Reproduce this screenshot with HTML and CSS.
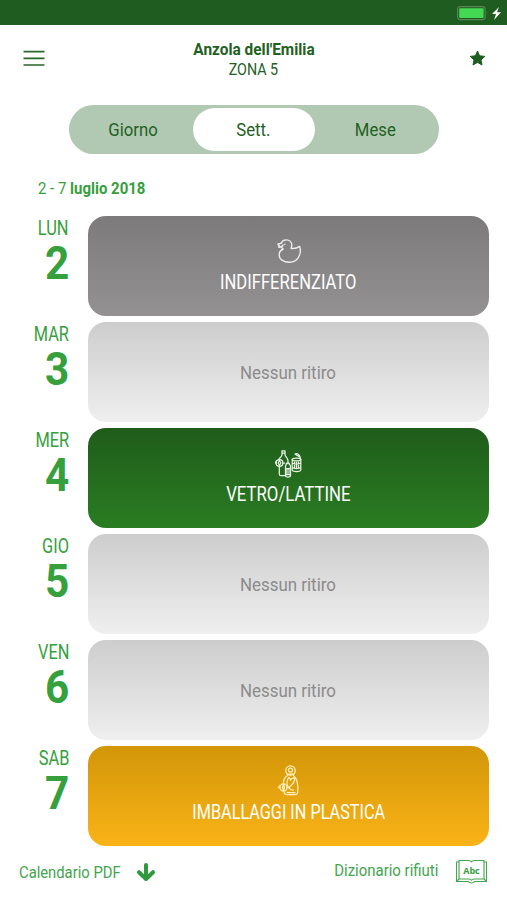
FILE: index.html
```
<!DOCTYPE html>
<html lang="it">
<head>
<meta charset="utf-8">
<title>Calendario raccolta</title>
<link rel="stylesheet" href="styles.css">
</head>
<body>
<div class="status">
  <svg width="48" height="18" viewBox="0 0 48 18"><rect x="1.6" y="2.6" width="27.5" height="13" rx="2.5" fill="none" stroke="#568556" stroke-width="1.2"/><rect x="3.2" y="4.2" width="24.4" height="9.8" rx="1" fill="#43d955"/><path d="M30.6 7v4q1.6-2 0-4z" fill="#568556"/><path d="M43 3l-7 7h4l-2 6 7-7.8h-4z" fill="#fff"/></svg>
</div>
<header class="top">
  <svg class="menu" width="22" height="18" viewBox="0 0 22 18"><path d="M.5 2.6h21M.5 9.3h21M.5 16h21" stroke="#2a652a" stroke-width="1.7"/></svg>
  <div class="place"><h1><span class="t title">Anzola dell'Emilia</span></h1><p><span class="t zone">ZONA 5</span></p></div>
  <svg class="star" width="17" height="16" viewBox="0 0 17 16"><path d="M8.5 1l2.1 4.8 5.2.6-3.8 3.5 1 5.1-4.5-2.6L4 15l1-5.1-3.8-3.5 5.2-.6z" fill="#1e5d20" stroke="#1e5d20" stroke-width="1" stroke-linejoin="round"/></svg>
</header>
<nav class="tabs">
  <a class="tab"><span class="t giorno">Giorno</span></a>
  <a class="tab active"><span class="t sett">Sett.</span></a>
  <a class="tab"><span class="t mese">Mese</span></a>
</nav>
<p class="range"><span class="t period">2 - 7 <b>luglio 2018</b></span></p>
<main class="week">
  <section class="row"><div class="day"><span class="t name">LUN</span><b class="t num">2</b></div>
    <div class="card grey"><svg width="28" height="30" viewBox="0 0 28 30"><g fill="none" stroke="#eee" stroke-width="1.35" stroke-linejoin="round" stroke-linecap="round"><path d="M6.5 4.8C7.2 2.9 9 1.8 11.2 1.8c3.2 0 5.6 2.2 5.6 5.2 0 1.4-.4 2.4-.8 3.3 3.6.6 6.2-.3 8.6-1.9 1 2.7.9 6.4-.2 9-1.8 4.5-5.4 6.8-10 6.8-6.2 0-10.2-3-10.2-7.3 0-2.6 1.4-4.8 4.1-5.9-1.2-.7-1.9-1.5-2.1-2.6"/><path d="M6.5 4.8c-.8.9-2 1.4-3.6 1.2.1 1 .7 1.5 1.5 1.7-.6.4-.8.9-.7 1.5 2 .2 3.7-.4 4.3-2.2"/></g><circle cx="9.8" cy="6.3" r=".8" fill="#eee"/></svg><span class="t indiff">INDIFFERENZIATO</span></div></section>
  <section class="row"><div class="day"><span class="t name">MAR</span><b class="t num">3</b></div><div class="card none"><span class="t empty">Nessun ritiro</span></div></section>
  <section class="row"><div class="day"><span class="t name">MER</span><b class="t num">4</b></div>
    <div class="card green"><svg width="28" height="30" viewBox="0 0 28 30"><g fill="none" stroke="#e9f2e5" stroke-width="1.25" stroke-linejoin="round" stroke-linecap="round"><path d="M7 .8h3v4c0 2 3 3 3 6v3M7 .8v4c0 2-3 3-3 5M6.9 3.1h3.2M4.3 16v8c0 1.2.5 1.6 1.6 1.6h4"/><circle cx="4.5" cy="13" r="3.4"/><path d="M1.3 13H.3l1-2M4.5 10.5l1.3 2.5-1.3 2.5L3.2 13zM7.5 13h2"/><path d="M10.5 16.5c.4-2 1-2.3 1-3.5h2.6c0 1.3 1.4 2 1.4 3.5v9c0 1-.8 1.5-2.5 1.5s-2.5-.5-2.5-1.5zM11.1 18.5h4v6h-4zM13 19.5v4"/><ellipse cx="21.5" cy="9.5" rx="4.3" ry="1.4"/><path d="M17.2 9.5v10.3c0 1 1.7 1.8 4.3 1.8s4.3-.8 4.3-1.8V9.5M17.2 13c2 1.4 6.6 1.4 8.6 0M17.2 17.6c2 1.4 6.6 1.4 8.6 0M19.5 12v6.5M21.5 12v6.5M23.5 12v6.5M25.5 9c.5-2.5-3.5-3-5.5-5 2-1.2 5.5.6 5.5 5"/></g></svg><span class="t vetro">VETRO/LATTINE</span></div></section>
  <section class="row"><div class="day"><span class="t name">GIO</span><b class="t num">5</b></div><div class="card none"><span class="t empty">Nessun ritiro</span></div></section>
  <section class="row"><div class="day"><span class="t name">VEN</span><b class="t num">6</b></div><div class="card none"><span class="t empty">Nessun ritiro</span></div></section>
  <section class="row"><div class="day"><span class="t name">SAB</span><b class="t num">7</b></div>
    <div class="card yellow"><svg width="28" height="34" viewBox="0 0 28 34"><g fill="none" stroke="#fff0bd" stroke-width="1.25" stroke-linejoin="round" stroke-linecap="round"><circle cx="15.5" cy="6.5" r="4.7"/><circle cx="15.5" cy="6" r="2"/><path d="M12.3 10h6.4M12.5 11.5c-3.4 2.2-4.3 5-4 8M18.5 11.5c4.5 4 4.7 12 4.2 17-.2 1.7-1.3 2.2-3 2.2h-7.3c-2.2 0-3.3-.7-3.4-3M12 28.5h8M14 13.5c-2.5 2.3-2.7 6.5-.5 10 3.5-2 6.5-6 6.2-9.5-2-.5-3.4.5-4.2 2.2 0-1-.4-2-1.5-2.7zM14 23.5c.8 1.7 2.6 2.8 4.5 2.5"/><circle cx="8.5" cy="23.5" r="3.6"/><path d="M5 23.5H3.5l1.3-2M12 23.5h2M8.5 20l1 3.5-1 3.5-1-3.5z"/></g></svg><span class="t plastica">IMBALLAGGI IN PLASTICA</span></div></section>
</main>
<footer class="foot">
  <a class="pdf"><span class="t cal">Calendario PDF</span><svg width="20" height="20" viewBox="0 0 20 20"><path d="M10 3v13M3 10.2l7 6.8 7-6.8" fill="none" stroke="#2e9a3b" stroke-width="4" stroke-linecap="round" stroke-linejoin="round"/></svg></a>
  <a class="dict"><span class="t diz">Dizionario rifiuti</span><svg width="33" height="26" viewBox="0 0 33 26"><g fill="none" stroke="#43a54d" stroke-width="1.1" stroke-linejoin="round"><path d="M4 3H1.5v19.5h12c1 2 5 2 6 0h12V3H29"/><path d="M4 1.5h9.5c1.5 0 2.5.6 3 1.4.5-.8 1.5-1.4 3-1.4H29v18.5h-9.5c-1.5 0-2.5.5-3 1.3-.5-.8-1.5-1.3-3-1.3H4z"/><path d="M4 20l-2.5 2.5M29 20l2.5 2.5"/></g><text x="16.5" y="15" text-anchor="middle" class="abc">Abc</text></svg></a>
</footer>
</body>
</html>
```
FILE: styles.css
```
* { box-sizing: border-box; }
body { margin: 0; height: 900px; overflow: hidden; background: #fff; color: #1f611f; font-family: Roboto, "Liberation Sans", sans-serif; font-size: 19px; }
h1, p { margin: 0; font-size: inherit; }
svg { display: block; flex: none; }
.t { display: inline-block; white-space: nowrap; }
.status { height: 25px; background: #1f5c1f; display: flex; justify-content: flex-end; padding: 4px 3px 0 0; }
.top { height: 80px; display: flex; justify-content: space-between; align-items: flex-start; padding: 14px 21px 0 23px; }
.menu { margin-top: 10px; }
.star { margin-top: 11px; }
.place { text-align: center; font-size: 17px; line-height: 20px; margin-right: 7px; }
.tabs { width: 370px; height: 49px; margin-left: 69px; padding: 3px 2px; border-radius: 25px; background: #b1c9b2; display: flex; }
.tab { flex: 1; display: flex; align-items: center; justify-content: center; padding: 0 1px 1px 0; }
.active { background: #fff; border-radius: 22px; }
.range { padding: 24px 0 0 38px; height: 62px; font-size: 17px; line-height: 20px; color: #35a03c; }
.week { display: flex; flex-direction: column; gap: 6.5px; }
.row { height: 99.5px; display: flex; }
.day { width: 88px; padding: 1px 19px 0 0; display: flex; flex-direction: column; align-items: flex-end; color: #36a03d; }
.name { font-size: 19.5px; line-height: 23px; transform: scaleX(.84); transform-origin: right; }
.num { font-size: 46px; line-height: 46px; transform: scaleX(.92); transform-origin: right; }
.card { width: 401px; border-radius: 18px; display: flex; flex-direction: column; align-items: center; justify-content: flex-end; padding-bottom: 22px; color: #fff; font-size: 19.5px; line-height: 23px; }
.card svg { margin-bottom: 3px; }
.grey { background: linear-gradient(#7c7a7b, #939192); }
.none { background: linear-gradient(#cdcdcd, #efefef); color: #8b8b8b; font-size: 19px; justify-content: center; padding: 2px 2px 0 0; }
.green { background: linear-gradient(#1f5c1b, #2a7d22); }
.yellow { background: linear-gradient(#d29608, #fab317); }
.title { transform: scaleX(.905); }
.zone { transform: scaleX(.84); }
.giorno, .mese { transform: scaleX(.88); }
.giorno { margin-left: 3px; }
.sett { transform: scaleX(.88); }
.period { transform: scaleX(.88); transform-origin: left; }
.indiff { transform: scaleX(.85); }
.vetro { transform: scaleX(.86); }
.plastica { transform: scaleX(.833); }
.empty { transform: scaleX(.89); }
.foot { display: flex; justify-content: space-between; padding: 12px 19px 0 19px; font-size: 17px; line-height: 24px; color: #43a54d; }
.pdf, .dict { display: flex; align-items: flex-start; }
.cal { width: 117px; transform: scaleX(.87); transform-origin: left; margin-top: 2px; }
.pdf svg { margin-top: 4px; }
.dict svg { margin-left: 17px; margin-top: 1px; }
.diz { transform: scaleX(.88); transform-origin: right; }
.abc { font: bold 9px "Open Sans", sans-serif; fill: #36a03d; }
```
